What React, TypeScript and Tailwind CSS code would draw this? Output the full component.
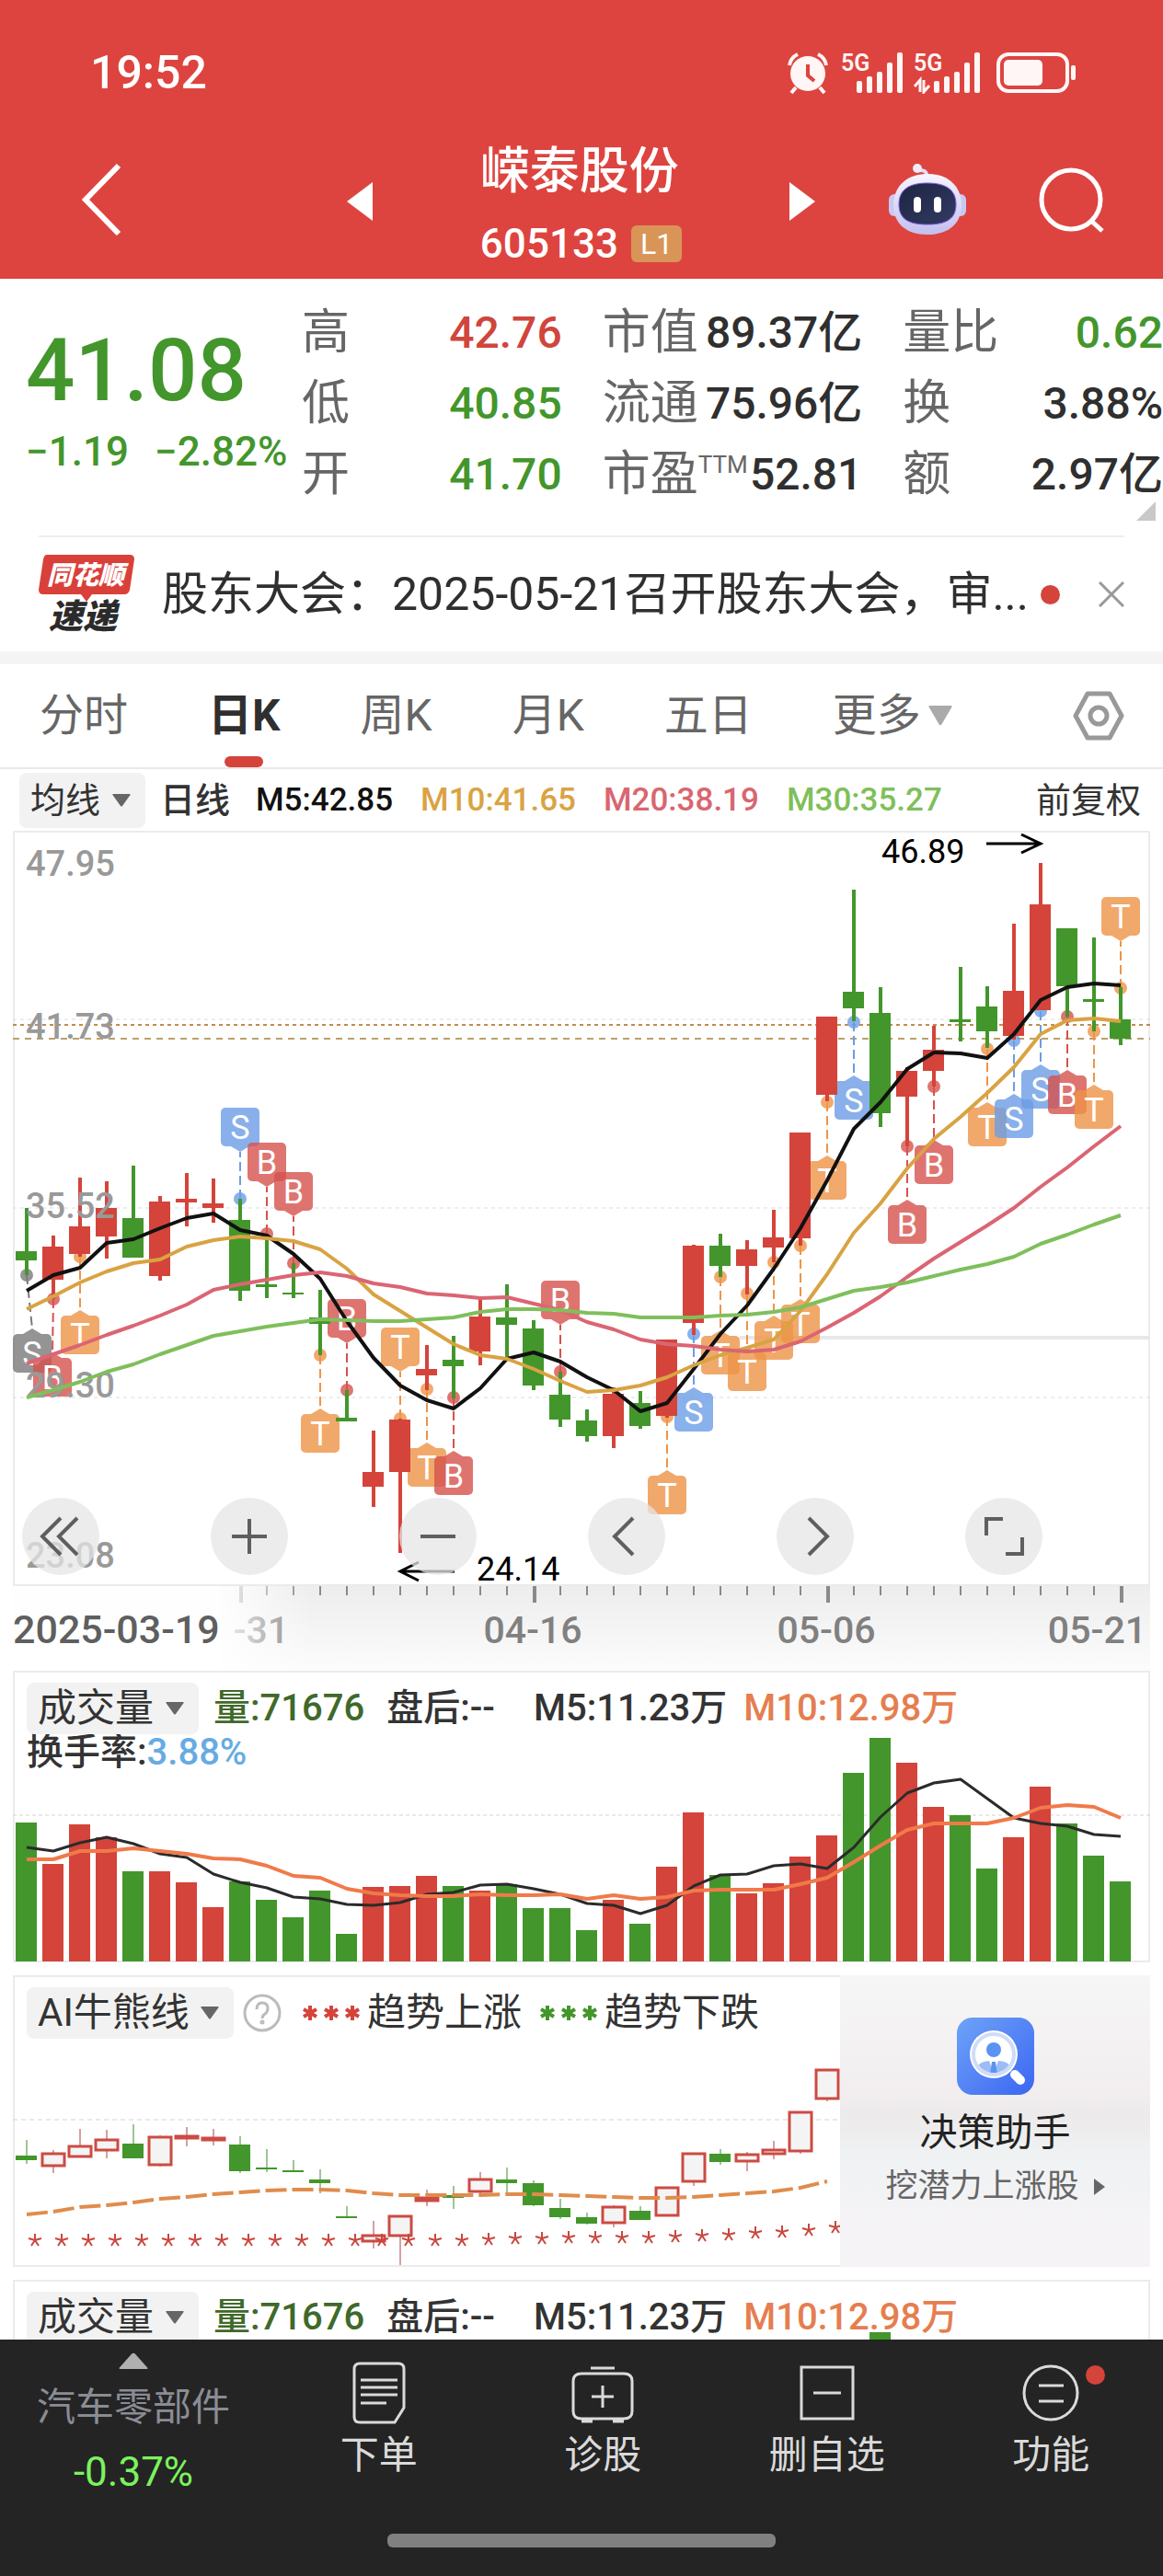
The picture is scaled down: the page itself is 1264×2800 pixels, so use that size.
import { useState } from 'react';
import type { ReactNode } from 'react';

const RED = '#d4443a';
const GREEN = '#43962b';
const STEP = 29;
const cx = (i: number) => 15 + STEP * i;

type Candle = [up: 0 | 1, high: number, top: number, bottom: number, low: number];

const CANDLES: Candle[] = [
  [0, 410, 457, 467, 483], [1, 440, 452, 488, 509], [1, 377, 430, 460, 463], [1, 381, 410, 441, 465],
  [0, 364, 421, 464, 464], [1, 397, 403, 484, 489], [1, 372, 400, 404, 430], [1, 378, 405, 410, 426],
  [0, 400, 423, 500, 511], [0, 438, 493, 496, 508], [0, 470, 502, 504, 508], [0, 499, 529, 536, 570],
  [0, 608, 638, 642, 642], [1, 652, 697, 713, 735], [1, 639, 640, 697, 785], [1, 559, 585, 592, 608],
  [0, 549, 575, 582, 617], [1, 508, 528, 566, 581], [0, 493, 529, 537, 572], [0, 532, 541, 603, 608],
  [0, 588, 613, 640, 648], [0, 629, 641, 658, 664], [1, 605, 612, 658, 671], [0, 609, 622, 647, 650],
  [1, 553, 553, 636, 638], [1, 450, 451, 535, 548], [0, 438, 451, 473, 485], [1, 445, 455, 473, 504],
  [1, 412, 442, 453, 469], [1, 328, 328, 443, 451], [1, 202, 202, 287, 294], [0, 64, 175, 193, 207],
  [0, 170, 198, 307, 322], [1, 257, 261, 289, 343], [1, 212, 238, 261, 278], [0, 148, 205, 208, 229],
  [0, 169, 191, 218, 236], [1, 101, 174, 223, 227], [1, 35, 80, 195, 195], [0, 106, 106, 169, 202],
  [0, 116, 183, 186, 218], [0, 170, 205, 226, 233],
];

type Marker = [index: number, letter: 'S' | 'B' | 'T', dot: number, above?: boolean];

const MARKERS: Marker[] = [
  [1, 'B', 509], [2, 'T', 463], [8, 'S', 400, true], [9, 'B', 438, true], [10, 'B', 470, true],
  [11, 'T', 570], [12, 'B', 608, true], [14, 'T', 639, true], [15, 'T', 607], [16, 'B', 616],
  [20, 'B', 588, true], [24, 'T', 637], [25, 'S', 547], [26, 'T', 485], [27, 'T', 503], [28, 'T', 469],
  [29, 'T', 451], [30, 'T', 295], [31, 'S', 208], [33, 'B', 343], [34, 'B', 278], [36, 'T', 237],
  [37, 'S', 228], [38, 'S', 196], [39, 'B', 202], [40, 'T', 218], [41, 'T', 171, true],
];

const MARKER_COLOR = { S: '#6c9de6', B: '#d6524d', T: '#ee9447' };

const MA = {
  m5: [500, 483, 475, 448, 444, 432, 421, 416, 434, 440, 460, 487, 533, 573, 603, 619, 628, 606, 574, 567, 577, 594, 608, 631, 622, 585, 547, 516, 476, 432, 380, 324, 295, 259, 241, 242, 247, 221, 184, 170, 166, 168],
  m10: [520, 506, 491, 479, 470, 466, 452, 445, 441, 443, 446, 455, 476, 504, 522, 540, 558, 570, 574, 585, 598, 610, 608, 603, 594, 581, 570, 562, 553, 522, 482, 437, 405, 367, 335, 311, 285, 257, 221, 206, 204, 207],
  m20: [579, 569, 559, 548, 538, 527, 515, 499, 493, 488, 483, 480, 484, 492, 496, 503, 505, 508, 507, 514, 521, 534, 542, 553, 558, 560, 564, 566, 564, 555, 540, 524, 506, 485, 465, 447, 429, 410, 387, 366, 343, 321],
  m30: [616, 608, 599, 588, 580, 569, 559, 549, 544, 539, 535, 531, 532, 533, 533, 531, 529, 523, 520, 520, 521, 524, 525, 529, 529, 529, 527, 526, 523, 518, 509, 500, 496, 491, 484, 477, 471, 463, 449, 439, 428, 418],
};

const VOLUME = [165, 210, 167, 181, 218, 218, 230, 257, 229, 249, 268, 239, 286, 235, 234, 223, 234, 239, 232, 258, 258, 282, 249, 275, 213, 154, 222, 242, 231, 202, 179, 111, 73, 100, 148, 157, 215, 181, 126, 166, 201, 229];
const VOL_M5 = [192, 196, 187, 181, 188, 199, 203, 221, 230, 236, 246, 248, 254, 255, 252, 243, 241, 233, 232, 237, 243, 253, 255, 264, 255, 234, 222, 221, 212, 210, 215, 192, 159, 133, 122, 118, 139, 160, 166, 169, 178, 180];
const VOL_M10 = [205, 205, 196, 196, 193, 196, 199, 204, 205, 212, 223, 225, 237, 242, 244, 245, 245, 243, 244, 244, 243, 248, 244, 248, 246, 239, 238, 238, 238, 232, 225, 208, 190, 173, 166, 166, 166, 160, 149, 146, 148, 160];

const BULL_LINE = [260, 257, 252, 250, 247, 243, 241, 238, 236, 234, 233, 233, 234, 237, 239, 239, 239, 239, 238, 238, 239, 240, 241, 242, 242, 241, 239, 237, 235, 231, 224];
const STARS = [288, 288, 288, 288, 288, 288, 288, 288, 288, 288, 288, 288, 288, 288, 288, 288, 288, 287, 286, 286, 285, 285, 285, 285, 284, 283, 282, 280, 279, 277, 274];

const points = (ys: number[]) => ys.map((y, i) => `${cx(i)},${y}`).join(' ');

function Line({ ys, color, width = 4, dash }: { ys: number[]; color: string; width?: number; dash?: string }) {
  return <polyline points={points(ys)} fill="none" stroke={color} strokeWidth={width} strokeDasharray={dash} strokeLinejoin="round" />;
}

function Down({ className = 'h-[14px] w-5' }: { className?: string }) {
  return (
    <svg viewBox="0 0 20 14" preserveAspectRatio="none" className={`pointer-events-none shrink-0 ${className}`} aria-hidden="true">
      <path d="M1 0h18q1 0 .6 1L11 13q-1 1-2 0L.4 1Q0 0 1 0z" fill="currentColor" />
    </svg>
  );
}

function StatusBar() {
  return (
    <div className="flex h-[158px] items-center justify-between pl-[98px] pr-[94px]">
      <time className="text-[50px] font-medium leading-none">19:52</time>
      <svg viewBox="0 0 314 46" className="h-[46px] w-[314px]" fill="#fff6f5">
        <circle cx="22" cy="24" r="19" />
        <path d="M2 15a16 16 0 0 1 9-12M42 15a16 16 0 0 0-9-12M9 39l-5 6M35 39l5 6" stroke="#fff6f5" strokeWidth="4" fill="none" />
        <path d="M22 14v12l7 6" stroke="#dd443f" strokeWidth="4" fill="none" />
        <text x="58" y="21" fontSize="25" fontWeight="600">5G</text>
        <text x="137" y="21" fontSize="25" fontWeight="600">5G</text>
        {[0, 84].map((dx) => (
          <g key={dx}>
            <rect x={75 + dx} y="32" width="6" height="13" rx="2" />
            <rect x={86 + dx} y="27" width="6" height="18" rx="2" />
            <rect x={97 + dx} y="22" width="6" height="23" rx="2" />
            <rect x={108 + dx} y="12" width="6" height="33" rx="2" />
            <rect x={119 + dx} y="1" width="6" height="44" rx="2" />
          </g>
        ))}
        <path d="M138 38l6-7v13M148 31v13l6-7" stroke="#fff6f5" strokeWidth="3" fill="none" />
        <rect x="229" y="3" width="75" height="40" rx="11" fill="none" stroke="#fff6f5" strokeWidth="4" />
        <rect x="235" y="9" width="42" height="28" rx="5" />
        <rect x="308" y="15" width="5" height="16" rx="2" />
      </svg>
    </div>
  );
}

function Robot() {
  return (
    <svg viewBox="0 0 84 78" className="h-[78px] w-[84px]">
      <defs>
        <linearGradient id="shell" x1="0" y1="0" x2="0" y2="1">
          <stop offset="0" stopColor="#f7f5ff" />
          <stop offset="1" stopColor="#c3bfee" />
        </linearGradient>
        <linearGradient id="visor" x1="0" y1="0" x2="1" y2="1">
          <stop offset="0" stopColor="#1d2442" />
          <stop offset="1" stopColor="#333b63" />
        </linearGradient>
      </defs>
      <path d="M41 14q1-8-9-7" fill="none" stroke="#e2dcf6" strokeWidth="4" />
      <circle cx="31" cy="5" r="5" fill="#efebfb" />
      <rect x="0" y="33" width="12" height="24" rx="6" fill="#c9c8f2" />
      <rect x="72" y="33" width="12" height="24" rx="6" fill="#c9c8f2" />
      <path d="M42 11c24 0 37 15 37 34S66 77 42 77 5 64 5 45s13-34 37-34z" fill="url(#shell)" />
      <path d="M42 21c21 0 31 8 31 23S64 66 42 66 11 59 11 44s10-23 31-23z" fill="url(#visor)" stroke="#7a5ce0" strokeWidth="1" />
      <rect x="27" y="36" width="8" height="17" rx="4" fill="#fff" />
      <rect x="49" y="36" width="8" height="17" rx="4" fill="#fff" />
    </svg>
  );
}

function NavBar() {
  return (
    <nav className="flex h-[145px] items-center pl-[88px] pr-[62px] pb-7">
      <button aria-label="返回" className="w-[46px]">
        <svg viewBox="0 0 46 80" className="h-20 w-[46px]"><path d="M41 3L5 40l36 37" fill="none" stroke="#fff" strokeWidth="6" /></svg>
      </button>
      <div className="flex flex-1 items-center justify-between pl-[243px] pr-[80px]">
        <button aria-label="上一只" className="mt-1">
          <svg viewBox="0 0 28 42" className="h-[42px] w-7"><path d="M28 0v42L0 21z" fill="#fff" /></svg>
        </button>
        <div className="mt-4 flex flex-col gap-2">
          <h1 className="text-[54px] font-medium leading-[72px]">嵘泰股份</h1>
          <div className="flex items-center gap-[14px]">
            <span className="text-[44px] font-medium leading-[68px]">605133</span>
            <span className="rounded-md bg-[#d99558] px-[10px] text-[32px] leading-10">L1</span>
          </div>
        </div>
        <button aria-label="下一只" className="mt-1">
          <svg viewBox="0 0 28 42" className="h-[42px] w-7"><path d="M0 0v42l28-21z" fill="#fff" /></svg>
        </button>
      </div>
      <button aria-label="智能助手" className="mr-[78px]"><Robot /></button>
      <button aria-label="搜索">
        <svg viewBox="0 0 74 74" className="h-[74px] w-[74px]" fill="none" stroke="#fff" strokeWidth="5">
          <circle cx="36" cy="37" r="32" />
          <path d="M58 60l12 11" />
        </svg>
      </button>
    </nav>
  );
}

type Tone = 'red' | 'green' | 'dark';
const TONE: Record<Tone, string> = { red: 'text-[#d0453c]', green: 'text-[#43962b]', dark: 'text-[#2f2f2f]' };

const QUOTES: [label: string, value: string, tone: Tone][][] = [
  [['高', '42.76', 'red'], ['低', '40.85', 'green'], ['开', '41.70', 'green']],
  [['市值', '89.37亿', 'dark'], ['流通', '75.96亿', 'dark'], ['市盈', '52.81', 'dark']],
  [['量比', '0.62', 'green'], ['换', '3.88%', 'dark'], ['额', '2.97亿', 'dark']],
];

function Quote() {
  return (
    <section className="relative flex h-[279px] pt-5">
      <div className="w-[328px] shrink-0 pl-7 pt-[32px] text-[#43962b]">
        <div className="text-[94px] font-medium leading-[96px]">41.08</div>
        <div className="mt-4 flex gap-7 whitespace-nowrap text-[44px] font-medium leading-[48px]">
          <span>−1.19</span>
          <span>−2.82%</span>
        </div>
      </div>
      <div className="flex flex-1 gap-11">
        {QUOTES.map((col) => (
          <dl key={col[0][0]} className="flex-1">
            {col.map(([label, value, tone]) => (
              <div key={label} className="flex h-[77px] items-center justify-between whitespace-nowrap leading-none">
                <dt className="flex text-[52px] text-[#666]">
                  {label}
                  {label === '市盈' && <sup className="top-0 text-[26px] leading-[30px]">TTM</sup>}
                </dt>
                <dd className={`text-[48px] font-medium ${TONE[tone]}`}>{value}</dd>
              </div>
            ))}
          </dl>
        ))}
      </div>
      <svg viewBox="0 0 21 21" className="absolute bottom-4 right-2 h-[21px] w-[21px]"><path d="M21 0v21H0z" fill="#c9c9c9" /></svg>
    </section>
  );
}

function News() {
  return (
    <section className="mx-[42px] flex h-[126px] items-center border-t-2 border-[#eee]">
      <svg viewBox="0 0 104 86" className="h-[86px] w-[104px] shrink-0 overflow-visible">
        <path d="M9 0h90q5 0 5 5l-5 33q-1 5-6 5H58l-6 8-6-8H5q-5 0-5-5L5 5q1-5 4-5z" fill="#d9403a" />
        <text x="9" y="32" fontSize="28" fontWeight="900" fontStyle="italic" fill="#fff">同花顺</text>
        <text x="11" y="80" fontSize="37" fontWeight="900" fontStyle="italic" fill="#2b2b2b">速递</text>
      </svg>
      <a href="#notice" className="ml-[30px] flex-1 truncate text-[50px] leading-[72px] text-[#2f2f2f]">
        股东大会：2025-05-21召开股东大会，审...
      </a>
      <span className="ml-1 h-[21px] w-[21px] shrink-0 rounded-full bg-[#d4443a]" />
      <button aria-label="关闭" className="ml-[42px]">
        <svg viewBox="0 0 28 28" className="h-7 w-7"><path d="M1 1l26 26M27 1L1 27" stroke="#999" strokeWidth="3" /></svg>
      </button>
    </section>
  );
}

const TABS = ['分时', '日K', '周K', '月K', '五日', '更多'];

function Tabs() {
  const [active, setActive] = useState('日K');
  return (
    <nav className="flex h-[114px] items-center border-b-2 border-[#e8e8e8] pl-[43px] pr-[42px]">
      <div className="flex h-full gap-[87px]">
        {TABS.map((tab) => (
          <button
            key={tab}
            onClick={() => setActive(tab)}
            className={`relative flex items-center gap-2 text-[48px] leading-none ${tab === active ? 'font-bold text-[#2f2f2f]' : 'text-[#666]'}`}
          >
            {tab}
            {tab === '更多' && <Down className="h-[22px] w-[26px] text-[#aaa]" />}
            {tab === active && <span className="absolute inset-x-0 bottom-0 mx-auto h-3 w-[42px] rounded-md bg-[#d4443a]" />}
          </button>
        ))}
      </div>
      <button aria-label="设置" className="ml-auto">
        <svg viewBox="0 0 56 54" className="h-[54px] w-14" fill="none" stroke="#999" strokeWidth="5" strokeLinejoin="round">
          <path d="M16 3h24l13 24-13 24H16L3 27z" />
          <circle cx="28" cy="27" r="9" />
        </svg>
      </button>
    </nav>
  );
}

function Picker({ label, name, size }: { label: string; name: string; size: string }) {
  return (
    <label className="relative flex shrink-0 items-center gap-3 rounded-lg bg-[#f2f2f2] pl-3 pr-4 text-[#333]">
      <select aria-label={name} className={`appearance-none bg-transparent leading-[56px] ${size}`}>
        <option>{label}</option>
      </select>
      <Down className="h-[14px] w-5 text-[#666]" />
    </label>
  );
}

function Averages() {
  return (
    <div className="flex h-[67px] items-center whitespace-nowrap pl-[21px] pr-6 text-[35px] font-medium leading-none">
      <Picker label="均线" name="主图指标" size="text-[38px] font-normal h-[60px]" />
      <span className="ml-4 text-[38px] text-[#333]">日线</span>
      <span className="ml-7 text-[#111]">M5:42.85</span>
      <span className="ml-[30px] text-[#d9a343]">M10:41.65</span>
      <span className="ml-[30px] text-[#d96670]">M20:38.19</span>
      <span className="ml-[30px] text-[#7fbf5b]">M30:35.27</span>
      <button className="ml-auto text-[38px] font-normal text-[#333]">前复权</button>
    </div>
  );
}

function Flag({ x, anchor = x, letter, dot, above, color }: { x: number; anchor?: number; letter: string; dot: number; above?: boolean; color: string }) {
  const top = above ? dot - 99 : dot + 64;
  const tip = above ? top + 48 : top - 6;
  const base = above ? top + 42 : top;
  return (
    <g>
      <circle cx={anchor} cy={dot} r="7" fill={color} opacity="0.8" />
      <path d={`M${anchor} ${dot}L${x} ${tip}`} stroke={color} strokeWidth="2" strokeDasharray="10 5" />
      <g opacity="0.8">
        <rect x={x - 21} y={top} width="42" height="42" rx="5" fill={color} />
        <path d={`M${x - 10} ${base}L${x} ${tip}L${x + 10} ${base}z`} fill={color} />
      </g>
      <text x={x} y={top + 34} fontSize="36" textAnchor="middle" fill="#fff">{letter}</text>
    </g>
  );
}

const SCALE: [label: string, y: number][] = [['47.95', 49], ['41.73', 226], ['35.52', 421], ['29.30', 616], ['23.08', 801]];

function RoundButton({ label, children }: { label: string; children: ReactNode }) {
  return (
    <button aria-label={label} className="h-[84px] w-[84px] rounded-full bg-[#e6e6e6]/75">
      <svg viewBox="0 0 84 84" className="h-full w-full" fill="none" stroke="#5f5f5f" strokeWidth="4">{children}</svg>
    </button>
  );
}

function KLine() {
  return (
    <section className="relative mx-[14px]">
      <svg viewBox="0 0 1236 821" className="block h-auto w-full">
        <rect x="1" y="1" width="1234" height="819" fill="#fff" stroke="#ebebeb" strokeWidth="2" />
        <g stroke="#dcdcdc" strokeWidth="1" strokeDasharray="4 4">
          <path d="M0 205h1236M0 410h1236M0 616h1236" />
        </g>
        <path d="M0 211h1236" stroke="#c28c4e" strokeWidth="2" strokeDasharray="4 4" />
        <path d="M0 226h1236" stroke="#bba06a" strokeWidth="2" strokeDasharray="7 6" />
        <path d="M790 551h446" stroke="#e8e8e8" strokeWidth="4" />
        <Flag x={21} anchor={15} letter="S" dot={483} color="#7a7a7a" />
        {MARKERS.map(([i, letter, dot, above]) => (
          <Flag key={i} x={i === 1 ? 43 : cx(i)} anchor={cx(i)} letter={letter} dot={dot} above={above} color={MARKER_COLOR[letter]} />
        ))}
        {CANDLES.map(([up, high, top, bottom, low], i) => (
          <g key={i} fill={up ? RED : GREEN}>
            <rect x={cx(i) - 2} y={high} width="4" height={low - high} />
            <rect x={cx(i) - 12} y={top} width="23" height={bottom - top} />
          </g>
        ))}
        <g fontSize="38" fontWeight="500" fill="#999">
          {SCALE.map(([label, y]) => <text key={label} x="14" y={y}>{label}</text>)}
        </g>
        <Line ys={MA.m5} color="#111" />
        <Line ys={MA.m10} color="#d9a343" />
        <Line ys={MA.m20} color="#db6573" />
        <Line ys={MA.m30} color="#7fbf5b" />
        <g fontSize="36" fill="#000">
          <text x="944" y="35">46.89</text>
          <text x="504" y="815">24.14</text>
        </g>
        <g fill="none" stroke="#000" strokeWidth="3">
          <path d="M1058 14h58M1096 4l21 10-21 10" />
          <path d="M480 805h-58M441 795l-20 10 20 10" />
        </g>
      </svg>
      <div className="absolute bottom-3 left-[10px] right-[117px] flex justify-between">
        <RoundButton label="更早"><path d="M42 22L22 42l20 20M60 22L40 42l20 20" /></RoundButton>
        <RoundButton label="放大"><path d="M23 42h38M42 23v38" /></RoundButton>
        <RoundButton label="缩小"><path d="M23 42h38" /></RoundButton>
        <RoundButton label="左移"><path d="M49 22L29 42l20 20" /></RoundButton>
        <RoundButton label="右移"><path d="M35 22l20 20-20 20" /></RoundButton>
        <RoundButton label="全屏"><path d="M23 41V23h18M44 61h18V43" /></RoundButton>
      </div>
    </section>
  );
}

function TimeAxis() {
  const ticks = Array.from({ length: 34 }, (_, k) => k + 8);
  return (
    <svg viewBox="0 0 1264 92" className="block h-auto w-full">
      <defs>
        <linearGradient id="axis" x1="0" y1="0" x2="0" y2="1">
          <stop offset="0" stopColor="#ededed" />
          <stop offset="1" stopColor="#fcfcfc" />
        </linearGradient>
        <linearGradient id="fade" x1="0" y1="0" x2="1" y2="0">
          <stop offset="0" stopColor="#fff" stopOpacity="0.9" />
          <stop offset="1" stopColor="#fff" stopOpacity="0" />
        </linearGradient>
      </defs>
      <rect x="14" width="1236" height="92" fill="url(#axis)" />
      {ticks.map((i) => (
        <rect key={i} x={14 + cx(i) - 1} y="0" width={(i - 8) % 11 ? 2 : 4} height={(i - 8) % 11 ? 10 : 18} fill="#8a8a8a" />
      ))}
      <g fontSize="41" fontWeight="500" fill="#808080">
        <text x="314" y="62" textAnchor="end">-31</text>
        <text x="579" y="62" textAnchor="middle">04-16</text>
        <text x="898" y="62" textAnchor="middle">05-06</text>
        <text x="1246" y="62" textAnchor="end">05-21</text>
      </g>
      <rect x="0" width="240" height="92" fill="#fff" opacity="0.9" />
      <rect x="240" width="100" height="92" fill="url(#fade)" />
      <text x="14" y="62" fontSize="43" fontWeight="500" fill="#5f5f5f">2025-03-19</text>
    </svg>
  );
}

function VolumePanel({ name, rate, shift = 0 }: { name: string; rate?: string; shift?: number }) {
  return (
    <section className="mx-[14px] grid">
      <svg viewBox="0 0 1236 317" className="col-start-1 row-start-1 h-auto w-full">
        <rect x="1" y="1" width="1234" height="315" fill="#fff" stroke="#ebebeb" strokeWidth="2" />
        <path d="M0 157h1236" stroke="#d4d4d4" strokeDasharray="4 3" />
        {VOLUME.map((top, i) => (
          <rect key={i} x={cx(i) - 12} y={top - shift} width="23" height={316 - top + shift} fill={CANDLES[i][0] ? RED : GREEN} />
        ))}
        <Line ys={VOL_M5} color="#2b2b2b" width={3} />
        <Line ys={VOL_M10} color="#f07a4a" width={4} />
      </svg>
      <div className="z-10 col-start-1 row-start-1 pl-[15px] pt-[13px] text-[40px] font-medium leading-none">
        <div className="flex items-center whitespace-nowrap">
          <Picker label="成交量" name={name} size="text-[42px] font-normal h-14" />
          <span className="ml-4 text-[#40692a]">量:71676</span>
          <span className="ml-6 text-[#333]">盘后:--</span>
          <span className="ml-[42px] text-[#333]">M5:11.23万</span>
          <span className="ml-[18px] text-[#e57e50]">M10:12.98万</span>
        </div>
        {rate && (
          <p className="leading-10 text-[#333]">
            换手率:<span className="text-[#66abe3]">{rate}</span>
          </p>
        )}
      </div>
      {shift > 0 && (
        <svg viewBox="0 0 1236 317" className="z-20 col-start-1 row-start-1 h-auto w-full">
          <rect x={cx(32) - 12} y={VOLUME[32] - shift} width="23" height="260" fill={GREEN} />
        </svg>
      )}
    </section>
  );
}

// the indicator panel plots the same candles on a compressed scale
const small = (y: number) => Math.round(30 + y * 0.363);

function Trend({ color, children }: { color: string; children: ReactNode }) {
  return (
    <span className="flex items-center gap-2 text-[#333]">
      <svg viewBox="0 0 62 18" className="h-[18px] w-[62px]" stroke={color} strokeWidth="4">
        {[8, 31, 54].map((x) => (
          <path key={x} d={`M${x} 1v16M${x - 7} 5l14 8M${x + 7} 5l-14 8`} />
        ))}
      </svg>
      {children}
    </span>
  );
}

function AssistantIcon() {
  return (
    <svg viewBox="0 0 84 84" className="h-[84px] w-[84px]">
      <defs>
        <linearGradient id="tile" x1="0" y1="0" x2="1" y2="1">
          <stop offset="0" stopColor="#6ea3f8" />
          <stop offset="1" stopColor="#3b66f2" />
        </linearGradient>
        <clipPath id="lens"><circle cx="40" cy="40" r="20" /></clipPath>
      </defs>
      <rect width="84" height="84" rx="17" fill="url(#tile)" />
      <path d="M63 62l6 6" stroke="#fff" strokeWidth="10" strokeLinecap="round" />
      <circle cx="40" cy="40" r="26" fill="#fff" />
      <circle cx="40" cy="40" r="22" fill="#fff" stroke="#cfdcf8" strokeWidth="4" />
      <g clipPath="url(#lens)">
        <circle cx="40" cy="35" r="8" fill="#5b93f3" />
        <path d="M20 62q0-14 15-15l5 14 5-14q16 1 16 15z" fill="#9dbcf5" />
        <path d="M38 48h4l2 14h-8z" fill="#5b93f3" />
      </g>
    </svg>
  );
}

function BullBearPanel() {
  return (
    <section className="mx-[14px] grid">
      <svg viewBox="0 0 1236 317" className="col-start-1 row-start-1 h-auto w-full">
        <rect x="1" y="1" width="1234" height="315" fill="#fff" stroke="#ebebeb" strokeWidth="2" />
        <path d="M0 157h1236" stroke="#d4d4d4" strokeDasharray="5 4" />
        {CANDLES.slice(0, 31).map(([up, high, top, bottom, low], i) => {
          const h = Math.max(small(bottom) - small(top), up ? 2 : 1);
          return (
            <g key={i}>
              <path d={`M${cx(i)} ${small(high)}V${small(low)}`} stroke={up ? '#a8453f' : '#3f8a2c'} strokeWidth="1" />
              {up ? (
                <rect x={cx(i) - 12} y={small(top)} width="24" height={h} fill="#f5f4f4" stroke="#cc4b43" strokeWidth="3" />
              ) : (
                <rect x={cx(i) - 12} y={small(top)} width="23" height={h + 1} fill={GREEN} />
              )}
            </g>
          );
        })}
        <Line ys={BULL_LINE} color="#e08c4c" width={4} dash="23 6" />
        <g stroke="#c8473f" strokeWidth="2">
          {STARS.map((y, i) => (
            <path key={i} d={`M${cx(i) + 9} ${y}v-7M${cx(i) + 9} ${y}l-7-2M${cx(i) + 9} ${y}l7-2M${cx(i) + 9} ${y}l-4 6M${cx(i) + 9} ${y}l4 6`} />
          ))}
        </g>
      </svg>
      <div className="z-10 col-start-1 row-start-1 flex items-start">
        <div className="flex flex-1 items-center whitespace-nowrap pl-[15px] pt-[13px] text-[42px] leading-none">
          <Picker label="AI牛熊线" name="趋势指标" size="text-[42px] h-14" />
          <button aria-label="说明" className="ml-[10px] mr-[23px]">
            <svg viewBox="0 0 42 42" className="h-[42px] w-[42px]" fill="none" stroke="#bbb" strokeWidth="3">
              <circle cx="21" cy="21" r="19" />
              <path d="M15 17q0-7 6-7t6 6q0 4-3 6t-3 5" />
              <circle cx="21" cy="31" r="1" />
            </svg>
          </button>
          <Trend color={RED}>趋势上涨</Trend>
          <span className="w-5" />
          <Trend color={GREEN}>趋势下跌</Trend>
        </div>
        <aside className="flex h-full w-[337px] flex-col items-center bg-[linear-gradient(to_bottom,#f6f6f6,#f2eef0_40%,#edeaeb_48%,#eff2f3_62%,#f5f3f6_85%)] pt-[46px]">
          <AssistantIcon />
          <h2 className="mt-3 text-[41px] leading-[58px] text-[#222]">决策助手</h2>
          <a href="#assistant" className="mt-1 flex items-center gap-4 text-[35px] leading-[52px] text-[#666]">
            挖潜力上涨股
            <svg viewBox="0 0 12 20" className="h-5 w-3"><path d="M0 1l12 9-12 9z" fill="#666" /></svg>
          </a>
        </aside>
      </div>
    </section>
  );
}

const ACTIONS: { label: string; dot?: boolean; icon: ReactNode }[] = [
  {
    label: '下单',
    icon: <path d="M13 2h42q6 0 6 6v42L51 66H13q-6 0-6-6V8q0-6 6-6zM14 20h40M14 28h40M14 36h40M14 45h28" />,
  },
  {
    label: '诊股',
    icon: <path d="M21 7h26M11 13h46q9 0 9 8v33q0 8-9 8H11q-9 0-9-8V21q0-8 9-8zM34 26v24M22 38h24M11 65h12M45 65h12" />,
  },
  { label: '删自选', icon: <path d="M6 6h56v56H6zM19 34h30" /> },
  {
    label: '功能',
    dot: true,
    icon: (
      <>
        <circle cx="34" cy="34" r="29" />
        <path d="M21 26h27M21 43h27" />
      </>
    ),
  },
];

function BottomBar() {
  return (
    <footer className="relative z-20 bg-[#242424] pb-[31px]">
      <div className="flex h-[211px]">
        <button className="flex w-[290px] flex-col items-center pt-[14px]">
          <Down className="h-[18px] w-8 rotate-180 text-[#b0b0b0]" />
          <span className="mt-3 text-[42px] leading-[60px] text-[#8a8c94]">汽车零部件</span>
          <span className="mt-3 text-[44px] leading-[56px] text-[#7cf25f]">-0.37%</span>
        </button>
        {ACTIONS.map(({ label, icon, dot }) => (
          <button key={label} className="flex flex-1 flex-col items-center pt-6">
            <span className="relative">
              <svg viewBox="0 0 68 68" className="h-[68px] w-[68px]" fill="none" stroke="#dadada" strokeWidth="3">{icon}</svg>
              {dot && <span className="absolute -right-[25px] top-1 h-[21px] w-[21px] rounded-full bg-[#d4443a]" />}
            </span>
            <span className="mt-1 text-[42px] leading-[60px] text-[#dadada]">{label}</span>
          </button>
        ))}
      </div>
      <div className="mx-auto h-[15px] w-1/3 rounded-md bg-[#808080]" />
    </footer>
  );
}

export default function App() {
  return (
    <div className="overflow-hidden bg-white font-[Roboto,'Noto_Sans_CJK_SC',sans-serif]">
      <header className="bg-[#dd443f] text-white">
        <StatusBar />
        <NavBar />
      </header>
      <Quote />
      <News />
      <div className="h-[14px] bg-[#f4f4f4]" />
      <Tabs />
      <Averages />
      <KLine />
      <TimeAxis />
      <VolumePanel name="副图一" rate="3.88%" />
      <div className="mt-[14px]">
        <BullBearPanel />
      </div>
      <div className="mt-[14px] h-[65px] overflow-hidden">
        <VolumePanel name="副图三" shift={16} />
      </div>
      <BottomBar />
    </div>
  );
}
